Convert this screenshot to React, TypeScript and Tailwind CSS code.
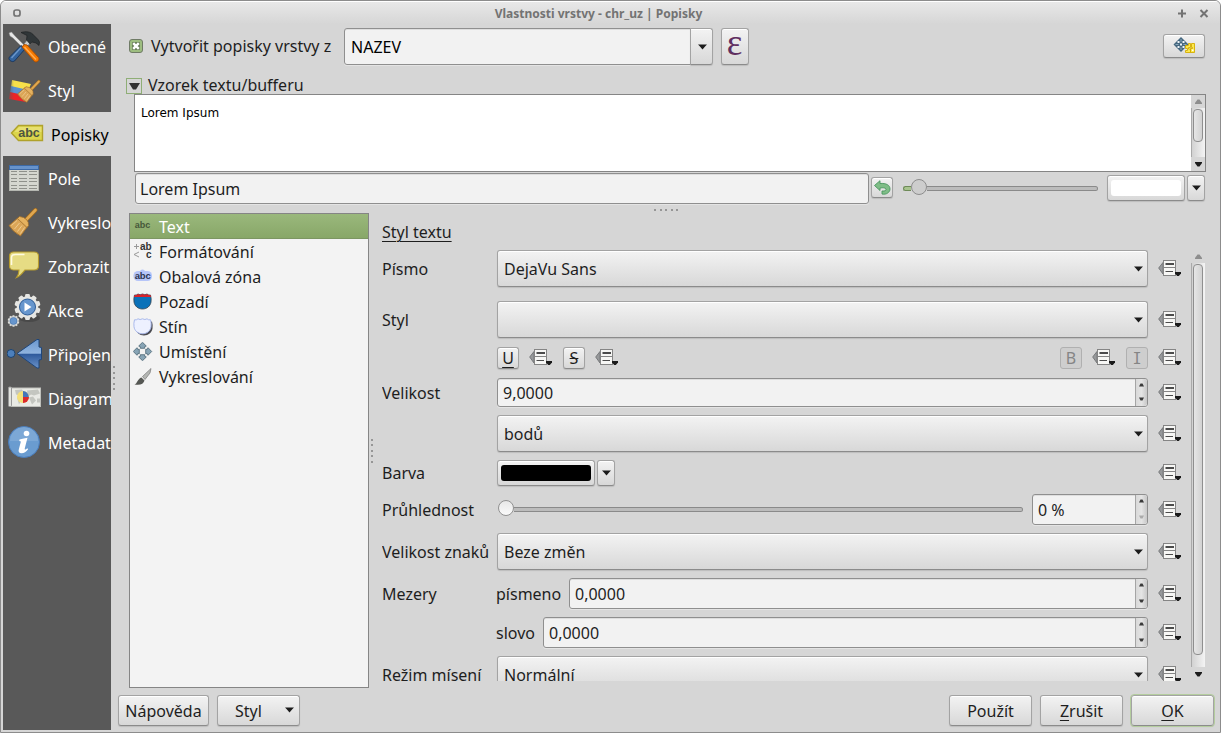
import React from "react";

const face =
  "border border-[#a3a3a3] border-b-[#8b8b8b] bg-linear-to-b from-[#f3f3f3] to-[#d8d8d8] rounded-[3px] shadow-[inset_0_1px_0_#fff,0_1px_1px_rgba(0,0,0,0.12)]";
const field = "border border-[#8f8f8f] bg-[#f2f2f2] rounded-[3px] shadow-[0_1px_0_#e4e4e4,inset_0_1px_0_#dedede]";

function Down({ className = "" }: { className?: string }) {
  return (
    <svg className={"shrink-0 " + className} width="9" height="6" viewBox="0 0 9 6">
      <path d="M0 .5h9L7.5 2 4.5 5.5 1.5 2z" fill="#1c1c1c" />
    </svg>
  );
}

function Override({ className = "" }: { className?: string }) {
  return (
    <svg className={"shrink-0 " + className} width="24" height="18" viewBox="0 0 24 18">
      <path d="M5 3.500v11.500L.7 9z" fill="#97999b" stroke="#77797b" strokeWidth="1" />
      <rect x="5.500" y="1.500" width="12" height="15" fill="#f7f7f5" stroke="#858585" />
      <path d="M6 8.500h11" stroke="#858585" />
      <path d="M7.500 5h8.500" stroke="#4b4b4b" strokeWidth="2" />
      <path d="M7.500 12.500h7.500" stroke="#4b4b4b" />
      <path d="M17 13h6v1.500l-2.200 2.500h-1.600L17 14.500z" fill="#1a1a1a" />
    </svg>
  );
}

function Spin({ off = false }: { off?: boolean }) {
  return (
    <div className="flex w-[12px] shrink-0 flex-col items-center justify-between rounded-r-[3px] border-l border-[#a5a5a5] bg-linear-to-r from-[#d9d9d9] via-[#e4e4e4] to-[#c8c8c8] pt-[4px] pb-[5px]">
      <svg width="5" height="4" viewBox="0 0 5 4"><path d="M0 3.5 1.5.5h2l1.5 3z" fill="#3a3a3a" /></svg>
      <svg width="5" height="4" viewBox="0 0 5 4"><path d="M0 .5 1.5 3.5h2L5 .5z" fill={off ? "#aaa" : "#3a3a3a"} /></svg>
    </div>
  );
}

function SpinBox({ value, className = "", off = false }: { value: string; className?: string; off?: boolean }) {
  return (
    <div className={`flex ${field} ${className}`}>
      <span className="flex flex-1 items-center pl-[5px]">{value}</span>
      <Spin off={off} />
    </div>
  );
}

function Combo({ value }: { value: string }) {
  return (
    <div className={`flex h-[37px] flex-1 items-center justify-between pr-[4px] pl-[6px] ${face}`}>
      <span>{value}</span>
      <Down />
    </div>
  );
}

function Row({ label, className, children }: { label?: string; className: string; children: React.ReactNode }) {
  return (
    <div className={`flex shrink-0 items-center ${className}`}>
      <div className="w-[115px] shrink-0">{label}</div>
      <div className="flex w-[651px] items-center">{children}</div>
      <Override className="mb-[2px] ml-[10px]" />
    </div>
  );
}

function SquareBtn({ children, disabled = false }: { children: React.ReactNode; disabled?: boolean }) {
  return (
    <div
      className={
        "flex h-[22px] w-[22px] shrink-0 items-center justify-center leading-[20px] " +
        (disabled ? "rounded-[3px] border border-[#b0b0b0] bg-[#cecece] text-[#858585]" : face)
      }
    >
      {children}
    </div>
  );
}

function Broom() {
  return (
    <g>
      <path d="M19 15 28.500 5" stroke="#a06a1c" strokeWidth="4" strokeLinecap="round" />
      <path d="M18 16 28.500 5" stroke="#e0a750" strokeWidth="2.600" strokeLinecap="round" />
      <path d="M12 12 21 21 13.500 31Q6 27 2 20.500z" fill="#dba657" stroke="#a06f2c" strokeWidth=".9" strokeLinejoin="round" />
      <path d="M12.500 11.500Q17 12 19.500 14.500T21.500 20.500L20 22.500 10.500 13.500z" fill="#e6b25f" stroke="#a06f2c" strokeWidth=".8" />
      <path d="M10 15.500 4.500 20.500M12.500 18 7.500 24M15 20.500 10.500 26.500M17.500 22.500 13.500 28.500" stroke="#f0cd94" strokeWidth=".9" />
    </g>
  );
}

const gearTeeth = [0, 36, 72, 108, 144, 180, 216, 252, 288, 324];

function Gear({ teethFill }: { teethFill: string }) {
  return (
    <g fill={teethFill}>
      {gearTeeth.map((a) => <rect key={a} x="-2.400" y="-13" width="4.800" height="6" rx="1.200" transform={`rotate(${a})`} />)}
      <circle r="10.800" />
      <circle r="8" fill="#6796cd" stroke="#2f5c95" />
    </g>
  );
}

const sideIcons: Record<string, React.ReactNode> = {
  tools: (
    <svg width="34" height="34" viewBox="0 0 34 34">
      <path d="M2 4 4.500 3 8 7 17 16 15 18 6 9 3 7z" fill="#e6e6e6" stroke="#8e8e8e" strokeWidth=".5" />
      <path d="M17 15 21 10 25 13 18 19z" fill="#c9cdcf" stroke="#777" strokeWidth=".6" />
      <path d="M14 3.500C19 2 24 2.500 27 6.500L31 10.500 32.500 13 32 16.500 29 14 25 13 23 15 19.500 11 20 6.500z" fill="#303638" stroke="#181b1c" strokeWidth=".6" />
      <path d="M14 16.500 18 20 7.500 32C4.500 34 .5 30 2.500 28z" fill="#33629b" stroke="#15335c" strokeWidth=".9" />
      <path d="M14 18.500 4.500 29" stroke="#6c98cc" strokeWidth="1.300" />
      <path d="M15 18 17 15.500 20 16 31.500 28.500C33 31 30 34 27.500 32.500z" fill="#f67900" stroke="#a74c00" strokeWidth=".9" />
      <path d="M17.500 18 29 30.500" stroke="#ffae55" strokeWidth="1.300" />
    </svg>
  ),
  style: (
    <svg width="34" height="34" viewBox="0 0 34 34">
      <defs>
        <linearGradient id="sweep" x1="0" x2="1"><stop stopColor="#595959" /><stop offset=".5" stopColor="#595959" stopOpacity="0" /></linearGradient>
      </defs>
      <path d="M5 7 24 11 21 18 4 14z" fill="#f8e04a" />
      <path d="M4 13 21 17 17 23 3 20z" fill="#5b91d0" />
      <path d="M3 19 16 22 19 29 2 26z" fill="#ee2328" />
      <path d="M1 6h12v23H1z" fill="url(#sweep)" opacity=".7" />
      <g transform="translate(9 4.500) scale(.8)"><Broom /></g>
    </svg>
  ),
  label: (
    <svg width="35" height="20" viewBox="0 1 35 20">
      <path d="M8.500 2.500h24v15h-24L1.500 10z" fill="#dbd54c" stroke="#b0a22c" strokeWidth="1.400" />
      <path d="M9 4h22.500v5H4.500z" fill="#eee784" opacity=".65" />
      <text x="19" y="13.500" textAnchor="middle" fontFamily="Liberation Sans" fontWeight="bold" fontSize="12.500" textLength="21.500" fill="#4c5440">abc</text>
    </svg>
  ),
  table: (
    <svg width="34" height="34" viewBox="0 0 34 34">
      <rect x="2.500" y="4.500" width="29" height="25" fill="#d5d7d0" stroke="#b4b6b0" />
      <rect x="2.500" y="4.500" width="29" height="4" fill="#6793cb" stroke="#3c69a5" />
      <g stroke="#8f918b" strokeWidth="1">
        <path d="M4 10.500h6M12 10.500h8M22 10.500h8M4 13.500h6M12 13.500h8M22 13.500h8M4 17.500h6M12 17.500h8M22 17.500h8M4 20.500h6M12 20.500h8M22 20.500h8M4 24.500h6M12 24.500h8M22 24.500h8M4 27.500h6M12 27.500h8M22 27.500h8" />
      </g>
    </svg>
  ),
  broom: <svg width="34" height="34" viewBox="0 0 34 34"><Broom /></svg>,
  bubble: (
    <svg width="34" height="34" viewBox="0 0 34 34">
      <path d="M6.500 3H27c3 0 4.500 2 4.500 4v10c0 3-2 4-4.500 4H18c-2 2-4.500 6-8.500 7.500 2-2.500 2.500-5 2.500-7.500H6.500c-3 0-4-2-4-4V7c0-3 2-4 4-4z" fill="#e6dc84" stroke="#b69b2e" strokeWidth="1.100" />
      <path d="M4.500 16V8.500q0-3 4-3h9" fill="none" stroke="#fffbe0" strokeWidth="1.600" />
    </svg>
  ),
  gears: (
    <svg width="34" height="34" viewBox="0 0 34 34">
      <ellipse cx="22" cy="25" rx="11" ry="4" fill="#333" opacity=".4" />
      <g transform="translate(20.500 14)"><Gear teethFill="#e6e6e3" /></g>
      <path d="M17.500 9.500v9l7-4.500z" fill="#fff" />
      <g transform="translate(6.500 28) scale(.45)"><Gear teethFill="#dcddda" /></g>
    </svg>
  ),
  join: (
    <svg width="38" height="34" viewBox="0 0 38 34">
      <defs>
        <linearGradient id="arrow" x2="0" y2="1"><stop stopColor="#6b98cf" /><stop offset=".48" stopColor="#8fb3de" /><stop offset=".52" stopColor="#2f5a9c" /><stop offset="1" stopColor="#6a92c8" /></linearGradient>
      </defs>
      <circle cx="4" cy="16.500" r="4" fill="#4c7fbb" stroke="#1d436f" />
      <path d="M10 16.500 30 2.500h2v7.500l2.500.5v12l-2.500.5V31h-2z" fill="url(#arrow)" stroke="#1f467a" />
    </svg>
  ),
  chart: (
    <svg width="36" height="24" viewBox="0 .5 36 24">
      <rect x="4" y="2.500" width="29.500" height="18.500" fill="#e9eae5" stroke="#bfc0bb" />
      <path d="M8 4.500 15 4l2 3-4 3-4-1zM10 12l5 1-3 6zM20 5l11-1 2 4-6 2-3-1-3 2zM22 12l4-1 3 4-4 4zM30 13h3v4h-3z" fill="#c4c6c0" />
      <rect x="1.500" y="1.500" width="3" height="19.500" rx="1" fill="#e2e3df" stroke="#999" />
      <circle cx="16" cy="11.500" r="6" fill="#f4df78" />
      <path d="M16 11.500v-6a6 6 0 0 1 5.800 6z" fill="#4576ba" /><path d="M16 11.500h6a6 6 0 0 1-6 6z" fill="#dc292c" />
    </svg>
  ),
  info: (
    <svg width="34" height="34" viewBox="0 0 34 34">
      <circle cx="17" cy="17" r="15.500" fill="#6a9cd0" stroke="#4a7cba" />
      <path d="M3 16a14 14 0 0 1 28 0z" fill="#a5c5e6" opacity=".3" />
      <circle cx="19.500" cy="8.500" r="2.800" fill="#fff" />
      <path d="M12.500 14.500c3-.6 5.500-1.300 8-1.800l-2.700 10.500c-.3 1.600.6 1.800 2.500 0l.8 1c-2 2.700-4 4-6.500 4-2.800 0-3.500-1.600-2.700-4.200l2-7.500-1.600-.5z" fill="#fff" />
    </svg>
  ),
};

const side: [string, string][] = [
  ["tools", "Obecné"], ["style", "Styl"], ["label", "Popisky"], ["table", "Pole"], ["broom", "Vykreslo"],
  ["bubble", "Zobrazit"], ["gears", "Akce"], ["join", "Připojen"], ["chart", "Diagram"], ["info", "Metadat"],
];

const shield = "M1.500 2.500q2 .5 3.500-1 2 1.500 4.500 0 2.500 1.500 4.500 0 1.500 1.500 3.500 1 1 3.500.5 7c-.6 4-4 7-8.500 7S1.600 13.500 1 9.500q-.5-3.500.5-7z";
const arrowUp = "M0-9.200 3.800-5.500 2.200-4.800V-3.200H-2.200V-4.800L-3.800-5.500z";
const list: [string, React.ReactNode][] = [
  ["Text", <text x="9.500" y="11" textAnchor="middle" fontFamily="Liberation Sans" fontWeight="bold" fontSize="9" textLength="15.500" fill="#46583a">abc</text>],
  ["Formátování", (
    <g fontFamily="Liberation Sans" fontWeight="bold" fontSize="10" fill="#333">
      <text x="7" y="7.500" textLength="11.500">ab</text><text x="13" y="16">c</text>
      <path d="M1 4.500h5M3.500 2v5M6 10l-5 2.500L6 15" fill="none" stroke="#999" />
    </g>
  )],
  ["Obalová zóna", (
    <g>
      <rect x=".5" y="4" width="18.500" height="10" rx="4.500" fill="#b6c5f8" />
      <rect x="7" y="2.500" width="5" height="9" rx="2.500" fill="#b6c5f8" />
      <text x="9.700" y="12" textAnchor="middle" fontFamily="Liberation Sans" fontWeight="bold" fontSize="9.500" textLength="16" fill="#2d3550">abc</text>
    </g>
  )],
  ["Pozadí", <g transform="translate(0 .5)"><path d={shield} fill="#0b72b9" stroke="#35424e" strokeWidth=".8" /><path d="M1.500 2.500q2 .5 3.500-1 2 1.500 4.500 0 2.500 1.500 4.500 0 1.500 1.500 3.500 1L18 4.500H1z" fill="#d6242b" /></g>],
  ["Stín", <g><path d={shield} transform="translate(1.500 2)" fill="#4a4a50" /><path d={shield} transform="translate(0 .3)" fill="#edf1ff" stroke="#a9b9ec" strokeWidth="1" /></g>],
  ["Umístění", <g transform="translate(9.500 9.500)" fill="#87a4b5" stroke="#4a6474" strokeWidth=".8"><path d={arrowUp} /><path d={arrowUp} transform="rotate(90)" /><path d={arrowUp} transform="rotate(180)" /><path d={arrowUp} transform="rotate(270)" /></g>],
  ["Vykreslování", (
    <g>
      <path d="M18 1.500 9.500 9.500l2.500 3L17 6z" fill="#b4b6b3" stroke="#777" strokeWidth=".7" />
      <path d="M8.500 10.500l3 3c-1 3.500-4 5-10 4 3-1 3-6 7-7z" fill="#555753" />
    </g>
  )],
];

function Dots({ vertical = false }: { vertical?: boolean }) {
  return (
    <div className={vertical ? "flex h-[24px] w-[2px] flex-col justify-between" : "flex h-[2px] w-[24px] justify-between"}>
      {[0, 1, 2, 3, 4].map((n) => <span key={n} className="h-[2px] w-[2px] bg-[#969696]" />)}
    </div>
  );
}

function ScrollBar({ thumb }: { thumb: string }) {
  return (
    <div className="flex h-full w-[14px] shrink-0 flex-col bg-[#d6d6d6]">
      <div className="flex h-[13px] items-center justify-center">
        <svg width="7" height="5" viewBox="0 0 7 5"><path d="M0 5V4L2.500.5h2L7 4v1z" fill="#8e8e8e" /></svg>
      </div>
      <div className="flex flex-1 border-l border-[#aaa] bg-linear-to-r from-[#d2d2d2] to-[#f4f4f4] pt-[1px] pl-[1px]">
        <div className={`w-[10px] rounded-[4px] border border-[#8f8f8f] bg-linear-to-r from-[#e6e6e6] to-[#d2d2d2] ${thumb}`} />
      </div>
      <div className="flex h-[14px] items-center justify-center">
        <svg width="7" height="5" viewBox="0 0 7 5"><path d="M0 0h7v1L4.500 4.500h-2L0 1z" fill="#1c1c1c" /></svg>
      </div>
    </div>
  );
}

function ColorBtn({ w, fill }: { w: string; fill: string }) {
  return (
    <div className="flex gap-[2px]">
      <div className={`h-[26px] p-[4px] px-[3px] ${w} ${face}`}><div className={`h-[16px] rounded-[3px] ${fill}`} /></div>
      <div className={`flex h-[26px] w-[18px] items-center justify-center ${face}`}><Down /></div>
    </div>
  );
}

function Push({ children, className = "w-[83px]" }: { children: React.ReactNode; className?: string }) {
  return <button className={`flex h-[31px] items-center justify-center pt-px ${face} ${className}`}>{children}</button>;
}

export default function App() {
  return (
    <div className="h-[733px] w-[1221px] bg-white">
      <div className="flex h-[733px] w-[1221px] flex-col overflow-hidden rounded-t-[6px] border border-[#8c8c8c] bg-[#d6d6d6] font-['Noto_Sans',sans-serif] text-[16px] leading-[22px] whitespace-nowrap text-[#1e1e1e]">
        <header className="flex h-[23px] shrink-0 items-center border-t border-white bg-linear-to-b from-[#e8e8e8] to-[#d6d6d6] pt-[1px] text-[12px] font-bold text-[#737373]">
          <svg className="mb-[2px] ml-[12px]" width="8" height="8" viewBox="0 0 8 8"><rect x="1" y="1" width="6" height="6" rx="2" fill="none" stroke="#737373" strokeWidth="1.700" /></svg>
          <span className="flex-1 pr-[2px] text-center">Vlastnosti vrstvy - chr_uz | Popisky</span>
          <svg className="mr-[11px] mb-px" width="31" height="9" viewBox="0 0 31 9"><path d="M0 4.500h8M4 .5v8" stroke="#737373" strokeWidth="2" /><path d="m22.500 1 7 7m0-7-7 7" stroke="#737373" strokeWidth="2" /></svg>
        </header>

        <div className="flex min-h-0 flex-1">
          <nav className="mb-[2px] ml-[2px] w-[108px] shrink-0 overflow-hidden bg-[#595959] text-white">
            {side.map(([icon, name]) => (
              <div key={icon} className={"flex h-[44px] items-center " + (icon === "label" ? "bg-[#d6d6d6] pl-[7px] text-black" : "pl-[4px]")}>
                <span className="flex w-[41px] shrink-0 items-center">{sideIcons[icon]}</span>
                <span className="pt-[2px]">{name}</span>
              </div>
            ))}
          </nav>
          <div className="flex w-[7px] shrink-0 items-center pl-[2px]"><Dots vertical /></div>

          <main className="flex min-w-0 flex-1 flex-col">
            <div className="mt-[4px] flex h-[37px] shrink-0 items-center pr-[15px] pl-[11px]">
              <span className="mb-px flex h-[14px] w-[14px] items-center justify-center rounded-[3px] border border-[#6f7b66] bg-[#9dbd80]">
                <svg width="8" height="8" viewBox="0 0 8 8"><rect width="8" height="8" rx="1" fill="#6b8059" /><path d="M1.200 1.200 6.800 6.800M6.800 1.200 1.200 6.800" stroke="#fff" strokeWidth="2.400" /></svg>
              </span>
              <span className="mb-[2px] ml-[8px] w-[193px]">Vytvořit popisky vrstvy z</span>
              <div className={`flex h-[37px] w-[347px] items-center rounded-r-none pl-[6px] text-black ${field}`}>NAZEV</div>
              <div className={`-ml-px flex h-[37px] w-[23px] items-center justify-center rounded-l-none ${face}`}><Down className="ml-px" /></div>
              <div className={`ml-[8px] flex h-[37px] w-[28px] items-center justify-center pr-px pb-[8px] font-['Liberation_Serif',serif] text-[37px] text-[#5f2f60] ${face}`}>ε</div>
              <div className={`mb-[2px] ml-auto flex h-[24px] w-[42px] items-center justify-center ${face}`}>
                <svg width="22" height="17" viewBox="0 0 22 17">
                  <path d="M8 0 15.500 7.500 8 15 .5 7.500z" fill="#45677f" />
                  <path d="M4.500 4h2v2h-2zM9.500 4h2v2h-2zM4.500 9h2v2h-2zM9.500 9h2v2h-2zM7 6.500h2v2H7z" fill="#edf3f7" />
                  <path d="M8 2v11M2.500 7.500h11" stroke="#8aa8bb" strokeDasharray="3 5" />
                  <path d="M12.500 8.500h3v-2h2v4h-2v1.500h2v3.500h-5v-2h2v-2h-2zM18.500 6.500h3v9h-4v-4h2v-1h-1z" fill="#fce94f" stroke="#d5ad00" strokeWidth=".9" />
                  <path d="M19 12.500h1.500v1.500H19z" fill="#fff" />
                </svg>
              </div>
            </div>

            <div className="mt-[11px] flex h-[18px] shrink-0 items-start pl-[8px]">
              <span className="mt-[2px] flex h-[16px] w-[16px] items-center justify-center border border-[#8fae76]">
                <svg width="11" height="7" viewBox="0 0 11 7"><path d="M0 0h11L7 6.500H4z" fill="#333" /></svg>
              </span>
              <span className="-mt-[2px] ml-[6px]">Vzorek textu/bufferu</span>
            </div>

            <div className="mr-[14px] ml-[16px] flex h-[78px] shrink-0 border border-[#858585] bg-white">
              <div className="flex-1 pt-[7px] pl-[6px] font-['DejaVu_Sans',sans-serif] text-[12px] text-black">Lorem Ipsum</div>
              <ScrollBar thumb="h-[33px]" />
            </div>
            <div className="mt-[1px] flex h-[31px] shrink-0 items-center pl-[17px]">
              <div className={`flex h-[31px] w-[734px] items-center pl-[4px] ${field}`}>Lorem Ipsum</div>
              <div className={`mb-[2px] ml-[2px] flex h-[21px] w-[22px] items-center justify-center ${face}`}>
                <svg className="mb-px" width="17" height="15" viewBox="0 0 17 15"><path d="M.5 5.500 6 .7v2.800C12 3 16 5 16 9c0 3.500-4 6-8 5V11c3 .3 4.500-.5 4-2-.7-1.300-3-1.500-6-1v2.500z" fill="#7fbd87" stroke="#4b9660" strokeWidth=".9" /></svg>
              </div>
              <div className="mb-[3px] ml-[10px] flex h-[16px] w-[195px] items-center">
                <div className="mt-[2px] h-[5px] w-[8px] rounded-l-[3px] border border-r-0 border-[#6e8a58] bg-[#a8c48e]" />
                <div className="h-[16px] w-[16px] rounded-full border border-[#8d8d8d] bg-[#cdcdcd]" />
                <div className="mt-[2px] h-[5px] flex-1 rounded-r-[3px] border border-l-0 border-[#8a8a8a] bg-[#bcbcbc]" />
              </div>
              <div className="mb-[2px] ml-[9px]"><ColorBtn w="w-[78px]" fill="bg-white" /></div>
            </div>
            <div className="flex h-[9px] shrink-0 items-end pb-[2px] pl-[536px]"><Dots /></div>

            <div className="flex h-[475px] shrink-0 pl-[11px]">
              <div className="w-[240px] shrink-0 border border-[#858585] bg-[#f3f3f3]">
                {list.map(([name, icon], n) => (
                  <div key={name} className={"flex h-[25px] items-center " + (n === 0 ? "border-b border-[#7c9662] bg-linear-to-b from-[#9ab87c] to-[#88a768] text-white" : "")}>
                    <svg className={"ml-[3px] shrink-0 " + (n === 0 ? "" : "mb-px")} width="20" height="19" viewBox="0 0 20 19">{icon}</svg>
                    <span className="ml-[6px] pt-px">{name}</span>
                  </div>
                ))}
              </div>
              <div className="flex w-[13px] shrink-0 items-center pl-[2px]"><Dots vertical /></div>
              <div className="flex h-[468px] flex-1 flex-col">
                <div className="mt-[8px] h-[29px] shrink-0"><span className="underline decoration-1 underline-offset-[3px]">Styl textu</span></div>
                <div className="flex h-[431px] overflow-hidden">
                  <div className="flex w-[809px] shrink-0 flex-col overflow-hidden">
                    <Row className="h-[37px]" label="Písmo"><Combo value="DejaVu Sans" /></Row>
                    <Row className="mt-[14px] h-[37px]" label="Styl"><Combo value="" /></Row>
                    <Row className="mt-[9px] h-[22px]">
                      <SquareBtn><span className="underline underline-offset-[3px]">U</span></SquareBtn>
                      <Override className="mb-[2px] ml-[10px]" />
                      <div className="ml-[10px]"><SquareBtn><span className="line-through">S</span></SquareBtn></div>
                      <Override className="mb-[2px] ml-[10px]" />
                      <div className="ml-auto"><SquareBtn disabled>B</SquareBtn></div>
                      <Override className="mb-[2px] ml-[10px]" />
                      <div className="ml-[10px]"><SquareBtn disabled><span className="font-['Noto_Sans_Mono','DejaVu_Sans_Mono',monospace]">I</span></SquareBtn></div>
                    </Row>
                    <Row className="mt-[9px] h-[29px]" label="Velikost"><SpinBox className="h-[29px] flex-1" value="9,0000" /></Row>
                    <Row className="mt-[8px] h-[37px]"><Combo value="bodů" /></Row>
                    <Row className="mt-[8px] h-[26px]" label="Barva"><ColorBtn w="w-[98px]" fill="bg-black" /></Row>
                    <Row className="mt-[8px] h-[31px]" label="Průhlednost">
                      <div className="mb-[3px] flex w-[526px] items-center">
                        <div className="ml-px h-[16px] w-[16px] shrink-0 rounded-full border border-[#919191] bg-linear-to-b from-[#e8e8e8] to-[#fafafa]" />
                        <div className="mt-[2px] h-[5px] flex-1 rounded-r-[3px] border border-l-0 border-[#8a8a8a] bg-[#bcbcbc]" />
                      </div>
                      <SpinBox className="ml-auto h-[31px] w-[116px]" value="0 %" off />
                    </Row>
                    <Row className="mt-[8px] h-[37px]" label="Velikost znaků"><Combo value="Beze změn" /></Row>
                    <Row className="mt-[8px] h-[31px]" label="Mezery"><span className="-ml-px w-[73px]">písmeno</span><SpinBox className="h-[31px] flex-1" value="0,0000" /></Row>
                    <Row className="mt-[8px] h-[31px]"><span className="-ml-px w-[47px]">slovo</span><SpinBox className="h-[31px] flex-1" value="0,0000" /></Row>
                    <Row className="mt-[8px] h-[37px]" label="Režim mísení"><Combo value="Normální" /></Row>
                  </div>
                  <ScrollBar thumb="h-[391px]" />
                </div>
              </div>
            </div>

            <footer className="mt-[7px] flex shrink-0 gap-[8px] pr-[6px]">
              <Push className="w-[91px]">Nápověda</Push>
              <Push className="w-[83px]"><span className="ml-[17px] flex-1 text-left">Styl</span><Down className="mr-[5px] mb-[2px]" /></Push>
              <div className="flex-1" />
              <Push>Použít</Push>
              <Push><span><span className="underline underline-offset-[3px]">Z</span>rušit</span></Push>
              <Push className="w-[83px] outline outline-[#b4cd9e]"><span><span className="underline underline-offset-[3px]">O</span>K</span></Push>
            </footer>
          </main>
        </div>
      </div>
    </div>
  );
}
